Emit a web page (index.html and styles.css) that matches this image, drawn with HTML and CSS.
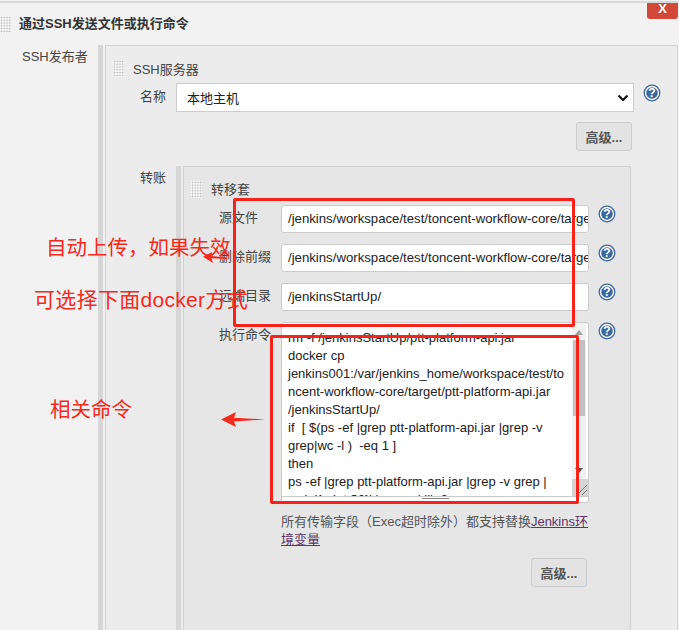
FILE: index.html
```html
<!DOCTYPE html>
<html lang="zh">
<head>
<meta charset="utf-8">
<title>SSH</title>
<link rel="stylesheet" href="styles.css">
</head>
<body>
<div class="page">
  <div class="close">X</div>
  <header class="step-head"><span class="grip"></span><h1>通过SSH发送文件或执行命令</h1></header>
  <div class="row-l1">
    <div class="label-l1">SSH发布者</div>
    <section class="panel-l1">
      <div class="sub-head"><span class="grip"></span><span>SSH服务器</span></div>
      <div class="name-row">
        <label>名称</label>
        <div class="select"><span>本地主机</span><svg class="chev" width="12" height="8" viewBox="0 0 12 8"><path d="M1.5 1.5 6 6l4.500-4.500" fill="none" stroke="#111" stroke-width="2.200"/></svg></div>
        <svg class="help" viewBox="0 0 18 18"><use href="#q"/></svg>
      </div>
      <div class="btn-row"><button class="btn">高级...</button></div>
      <div class="row-l2">
        <div class="label-l2">转账</div>
        <section class="panel-l2">
          <div class="set-head"><span class="grip"></span><span>转移套</span></div>
          <div class="field"><label>源文件</label><div class="input">/jenkins/workspace/test/toncent-workflow-core/target/ptt</div><svg class="help" viewBox="0 0 18 18"><use href="#q"/></svg></div>
          <div class="field"><label>删除前缀</label><div class="input">/jenkins/workspace/test/toncent-workflow-core/target/ptt</div><svg class="help" viewBox="0 0 18 18"><use href="#q"/></svg></div>
          <div class="field"><label>远端目录</label><div class="input">/jenkinsStartUp/</div><svg class="help" viewBox="0 0 18 18"><use href="#q"/></svg></div>
          <div class="field cmd-field">
            <label>执行命令</label>
            <div class="textarea">
              <div class="clip"><div class="code">rm -f /jenkinsStartUp/ptt-platform-api.jar<br>docker cp<br>jenkins001:/var/jenkins_home/workspace/test/to<br>ncent-workflow-core/target/ptt-platform-api.jar<br>/jenkinsStartUp/<br>if &nbsp;[ $(ps -ef |grep ptt-platform-api.jar |grep -v<br>grep|wc -l ) &nbsp;-eq 1 ]<br>then<br>ps -ef |grep ptt-platform-api.jar |grep -v grep |<br>awk '{print $2}' | xargs kill -9</div></div>
              <div class="scrollbar"><i class="up"></i><i class="thumb"></i><i class="down"></i></div>
              <div class="corner"><svg width="16" height="17" viewBox="0 0 16 17"><path d="M15 6 5 16M15 11l-5 5" stroke="#777" stroke-width="1" fill="none"/></svg></div>
              <div class="grab"></div>
            </div>
            <svg class="help" viewBox="0 0 18 18"><use href="#q"/></svg>
          </div>
          <p class="note">所有传输字段（Exec超时除外）都支持替换<a href="#">Jenkins环境变量</a></p>
          <div class="btn-row2"><button class="btn">高级...</button></div>
        </section>
      </div>
    </section>
  </div>

  <div class="mark mark-box1"></div>
  <div class="mark mark-box2"></div>
  <div class="anno anno1">自动上传，如果失效</div>
  <div class="anno anno2">可选择下面docker方式</div>
  <div class="anno anno3">相关命令</div>
  <svg class="arrow arrow1" width="24" height="11" viewBox="0 0 26 14" preserveAspectRatio="none"><path d="M0 6 10 0l-1 5 17 2v2L9 8l2 6z" fill="#f5291c"/></svg>
  <svg class="arrow arrow2" width="44" height="15" viewBox="0 0 44 16" preserveAspectRatio="none"><path d="M0 8 15 0l-2 6 31 2-31 2 2 6z" fill="#f5291c"/></svg>
</div>
<svg class="defs" width="0" height="0">
  <defs>
    <g id="q">
      <circle cx="9" cy="9" r="7.800" fill="#fff" stroke="#3c679f" stroke-width="1.300"/>
      <circle cx="9" cy="9" r="5.800" fill="#3c679f"/>
      <text x="9" y="13" text-anchor="middle" class="q-text">?</text>
    </g>
  </defs>
</svg>
</body>
</html>
```
FILE: styles.css
```css
* { box-sizing: border-box; }
html, body { margin: 0; padding: 0; }
body { background: #f2f2f2; font-family: "Liberation Sans", "Noto Sans CJK SC", sans-serif; color: #333; overflow: hidden; }
.page { position: relative; width: 679px; height: 630px; overflow: hidden; border-top: 2px solid #d9d9d9; margin-top: 1px; padding-top: 12px; }
.close { position: absolute; top: -3px; right: 1px; width: 31px; height: 19px; background: #d24939; color: #fff; font-weight: bold; font-size: 13px; line-height: 17px; text-align: center; border-radius: 0 0 3px 3px; }
.grip { display: inline-block; flex: none; width: 11px; height: 17px; background-color: #fff; background-image: radial-gradient(#bbb 45%, transparent 50%); background-size: 2.800px 2.800px; }
.step-head { display: flex; align-items: center; height: 18px; gap: 8px; }
.step-head h1 { margin: 0; font-size: 13px; font-weight: bold; line-height: 18px; color: #333; }
.row-l1 { display: flex; margin-top: 12px; }
.label-l1 { width: 98px; padding: 4px 0 0 22px; font-size: 13px; line-height: 16px; color: #444; }
.panel-l1 { flex: 1; height: 600px; margin-right: 1px; padding-top: 15px; border-left: 5px solid #d6d6d6; position: relative; background: #f2f2f2; }
.panel-l1::before { content: ""; position: absolute; inset: 0 0 0 2px; background: #ececec; border: 1px solid #d2d2d2; }
.panel-l1 > * { position: relative; }
.sub-head { display: flex; align-items: center; gap: 9px; height: 17px; margin-left: 10px; font-size: 13px; color: #444; }
.name-row { display: flex; align-items: flex-start; margin-top: 6px; height: 29px; }
.name-row label { width: 73px; padding: 6px 0 0 37px; font-size: 13px; line-height: 16px; color: #444; flex: none; }
.select { width: 458px; height: 29px; display: flex; align-items: center; justify-content: space-between; padding: 0 0 0 10px; background: #fff; border: 1px solid #ccc; font-size: 13px; color: #222; flex: none; }
.chev { margin-right: 4px; }
.help { width: 18px; height: 18px; flex: none; }
.name-row .help { margin: 1px 0 0 9px; }
.q-text { font: bold 12px "Liberation Sans", sans-serif; fill: #fff; }
.btn-row { display: flex; justify-content: flex-end; margin: 10px 46px 0 0; }
.btn { width: 56px; height: 29px; padding: 0; background: #e3e3e3; border: 1px solid #ccc; border-radius: 3px; font: bold 13px "Liberation Sans", "Noto Sans CJK SC", sans-serif; color: #555; }
.row-l2 { display: flex; margin-top: 14px; }
.label-l2 { width: 73px; padding: 5px 0 0 37px; font-size: 13px; line-height: 16px; color: #444; flex: none; }
.panel-l2 { width: 455px; height: 480px; margin-top: 1px; padding-top: 15px; border-left: 5px solid #d6d6d6; position: relative; }
.panel-l2::before { content: ""; position: absolute; inset: 0 0 0 2px; background: #e6e6e6; border: 1px solid #d0d0d0; }
.panel-l2 > * { position: relative; }
.set-head { display: flex; align-items: flex-start; gap: 9px; height: 18px; margin-left: 10px; font-size: 13px; line-height: 17px; color: #444; }
.field { display: flex; align-items: flex-start; margin: 6px 0 11px; height: 28px; }
.field label { flex: none; width: 100px; padding: 5px 0 0 38px; font-size: 13px; line-height: 16px; color: #444; white-space: nowrap; }
.input { flex: none; width: 308px; height: 28px; padding: 0 6px; background: #fff; border: 1px solid #ccc; border-radius: 3px; font-size: 13.200px; line-height: 26px; color: #222; overflow: hidden; white-space: nowrap; }
.field .help { margin: 0 0 0 9px; }
.cmd-field { height: 181px; margin-top: 0; margin-bottom: 0; }
.textarea { position: relative; flex: none; width: 308px; height: 181px; background: #fff; border: 1px solid #ccc; border-radius: 3px; overflow: hidden; }
.clip { position: absolute; left: 0; right: 0; top: 0; bottom: 5px; overflow: hidden; border-bottom: 1px solid #ccc; }
.code { position: absolute; left: 6px; top: 6px; font-size: 13px; line-height: 18px; color: #222; white-space: nowrap; }
.scrollbar { position: absolute; right: 2px; top: 0; width: 14px; height: 157px; background: #f1f1f1; }
.scrollbar .up { position: absolute; left: 3px; top: 7px; border: 4px solid transparent; border-top: 0; border-bottom: 5px solid #a0a0a0; }
.scrollbar .thumb { position: absolute; left: 1px; top: 17px; width: 12px; height: 76px; background: #c1c1c1; }
.scrollbar .down { position: absolute; left: 3px; bottom: 7px; border: 4px solid transparent; border-bottom: 0; border-top: 5px solid #505050; }
.corner { position: absolute; right: 0; bottom: 6px; width: 16px; height: 17px; background: #d4d4d4; }
.corner svg { display: block; }
.grab { position: absolute; left: 140px; bottom: 0; width: 27px; height: 4px; border-top: 1px solid #888; border-bottom: 1px solid #888; }
.note { margin: 10px 0 0 100px; width: 310px; font-size: 13px; line-height: 18px; color: #555; }
.note a { color: #5c3566; }
.btn-row2 { display: flex; margin: 9px 0 0 350px; }
.mark { position: absolute; border: 3px solid #f5231a; border-radius: 2px; }
.mark-box1 { left: 233px; top: 195px; width: 342px; height: 129px; }
.mark-box2 { left: 270px; top: 332px; width: 309px; height: 169px; }
.anno { position: absolute; color: #f5291c; font-family: "Liberation Sans", "Noto Sans CJK SC", sans-serif; font-size: 20.500px; line-height: 26px; white-space: nowrap; }
.anno1 { left: 46px; top: 232px; }
.anno2 { left: 34px; top: 284px; font-size: 21px; letter-spacing: 0.300px; }
.anno3 { left: 50px; top: 394px; }
.arrow { position: absolute; }
.arrow1 { left: 203px; top: 249px; }
.arrow2 { left: 221px; top: 409px; }
.defs { position: absolute; }
```
